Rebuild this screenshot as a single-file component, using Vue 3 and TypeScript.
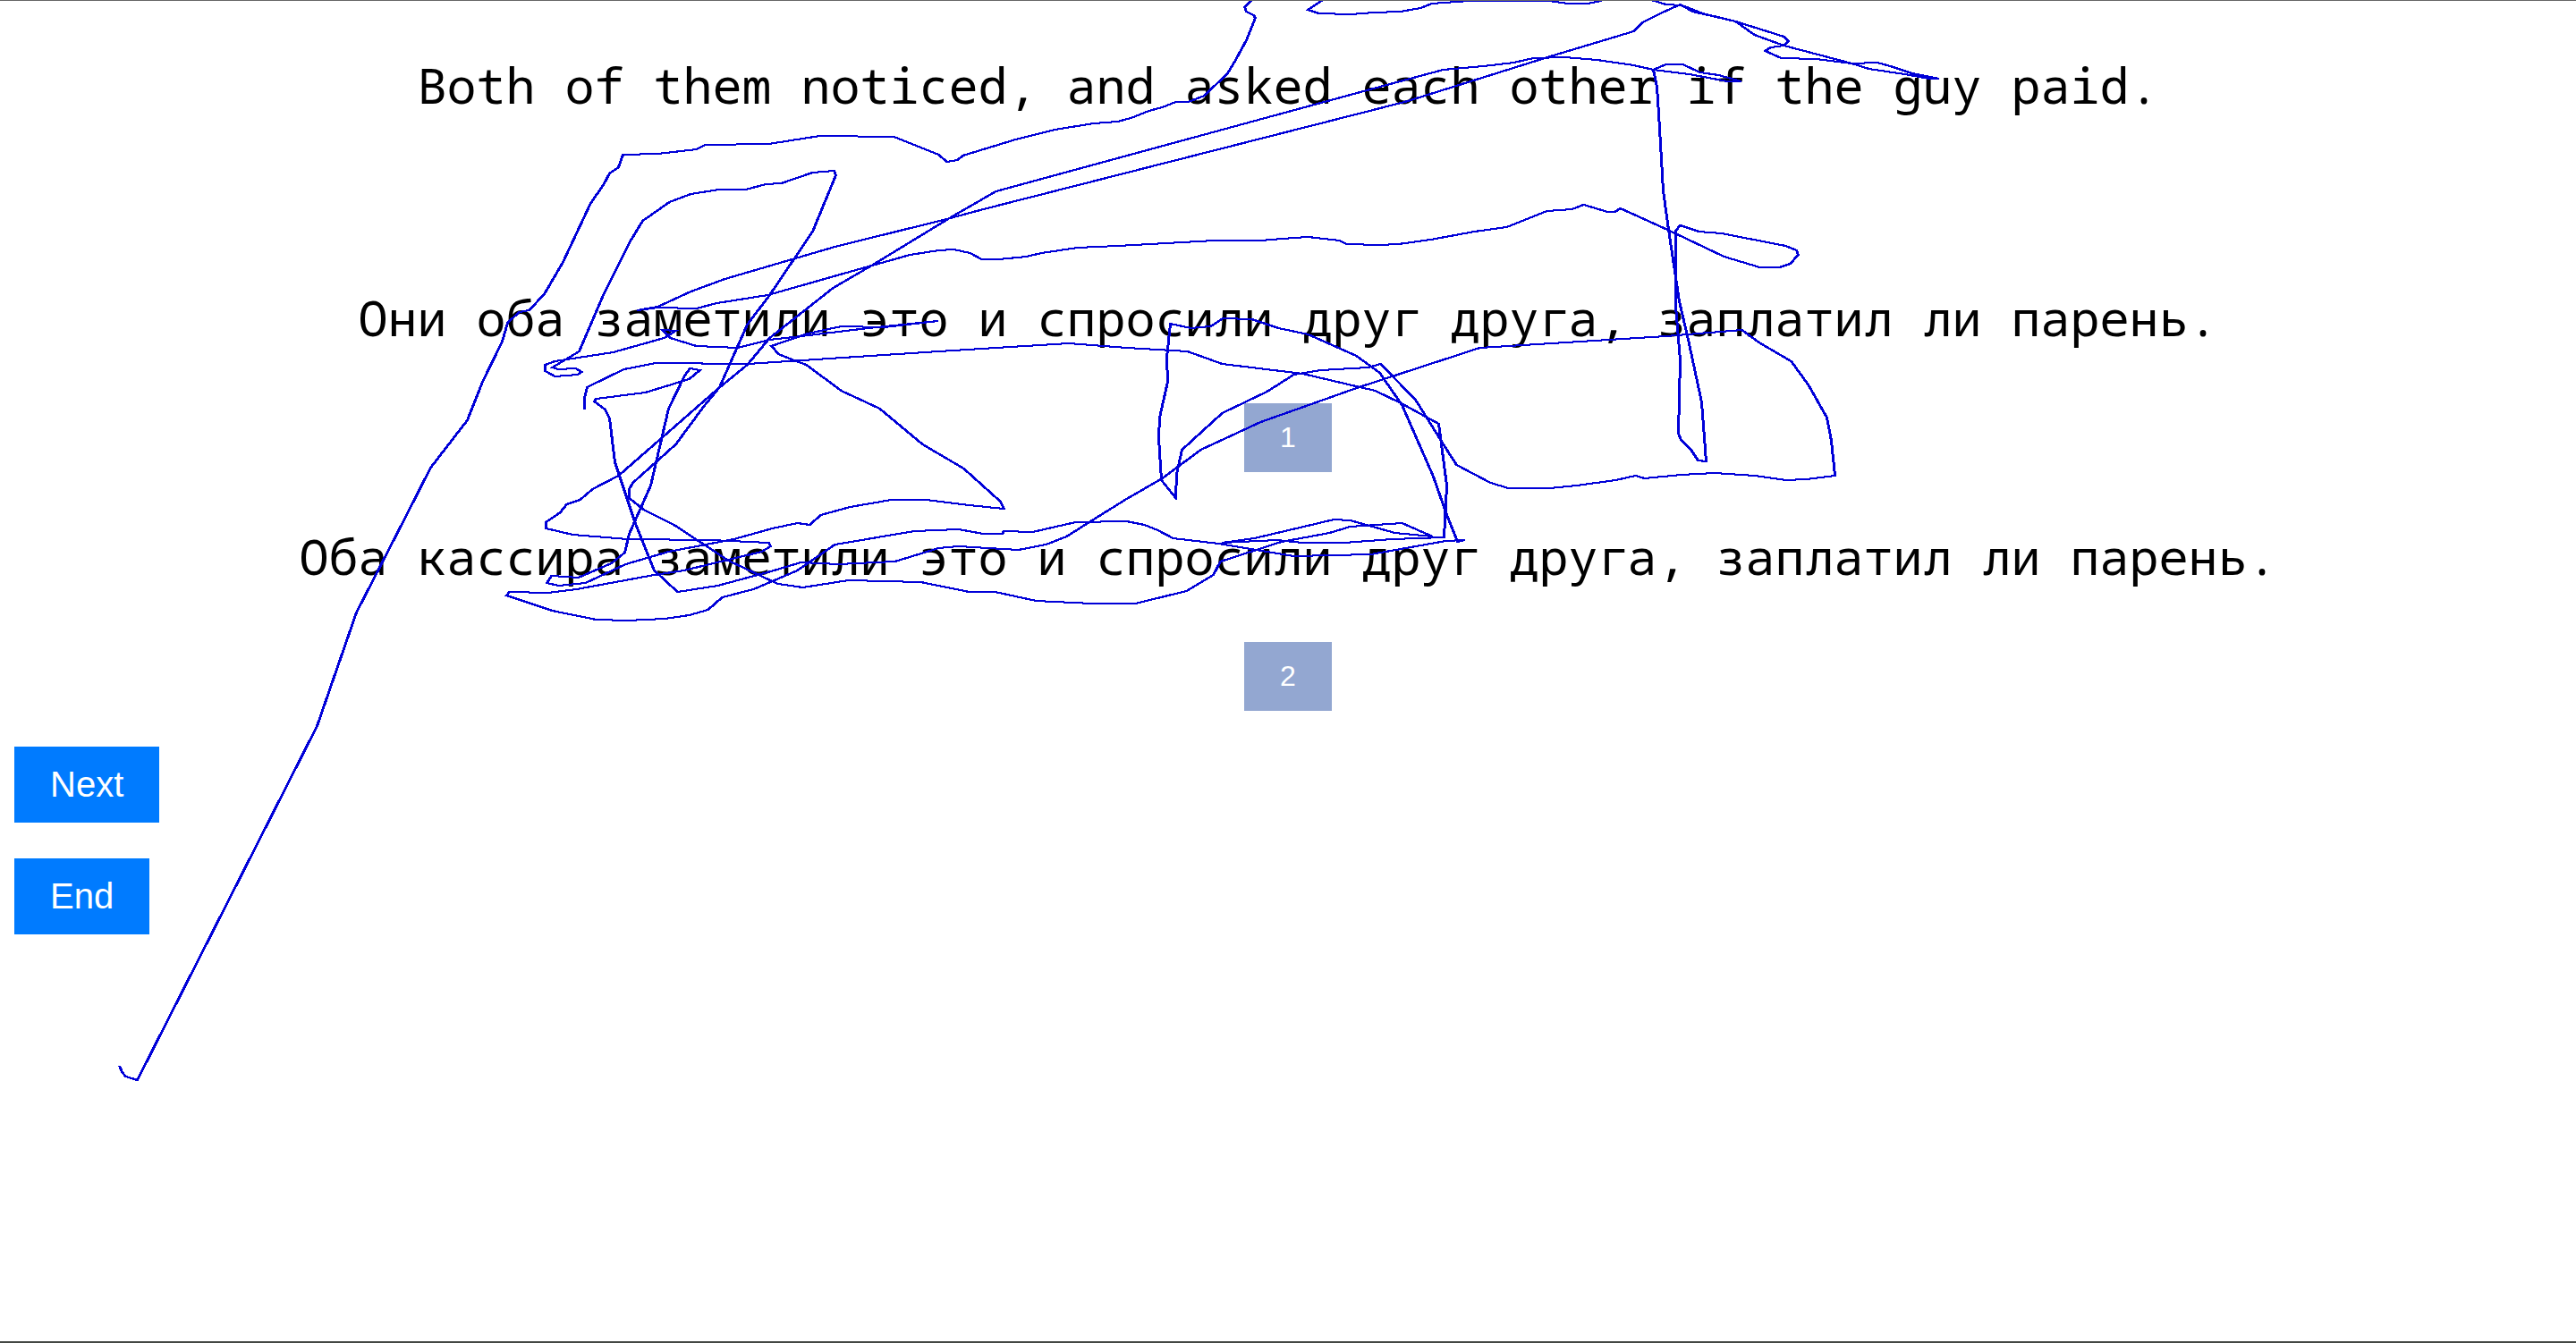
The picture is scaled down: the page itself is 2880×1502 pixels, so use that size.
<script setup lang="ts">
import { ref } from 'vue'

interface Candidate {
  id: number
  text: string
}

const source = 'Both of them noticed, and asked each other if the guy paid.'

const candidates: Candidate[] = [
  { id: 1, text: 'Они оба заметили это и спросили друг друга, заплатил ли парень.' },
  { id: 2, text: 'Оба кассира заметили это и спросили друг друга, заплатил ли парень.' },
]

const chosen = ref<number | null>(null)

// Recorded pointer track, in the order it was travelled.
const track = [
  '134,1192 137,1199 141,1204 148,1206 154,1208 355,812 399,685 453,580 482,523 523,470 540,427 562,382',
  '568,361 581,349 592,347 609,329 630,293 661,227 675,207 682,194 692,187 697,173 736,172 779,167',
  '789,162 860,161 917,152 1000,153 1050,173 1059,181 1071,179 1077,174 1100,167 1136,156 1180,145',
  '1223,138 1250,136 1265,132 1285,124 1300,120 1315,114 1329,114 1347,107 1373,82 1382,67 1394,45',
  '1404,20 1402,17 1394,13 1392,8 1399,1 1404,-3 1482,-3 1479,0 1463,11 1475,15 1511,16 1537,14',
  '1566,13 1589,9 1601,4 1643,1 1732,1 1754,4 1776,4 1790,1 1800,-4 1840,-4 1847,0 1863,5 1881,6',
  '1904,15 1941,24 1995,41 2000,46 1995,51 1980,53 1974,57 1992,65 2031,66 2071,71 2099,70 2114,74',
  '2138,82 2168,88 2158,88 2130,83 2090,77 2071,71 1995,51 1962,39 1941,24 1893,13 1879,5 1857,15',
  '1837,25 1827,35 1734,63 1600,105 1571,114 1100,234 1059,245 934,276 811,312 773,326 736,343',
  '713,347 736,344 779,345 802,339 859,330 961,301 1018,285 1050,280 1067,279 1085,283 1098,290',
  '1117,290 1148,287 1165,283 1205,277 1250,275 1358,269 1410,269 1447,266 1463,265 1498,269',
  '1506,273 1543,274 1564,273 1600,268 1649,259 1685,254 1730,236 1758,234 1771,229 1798,237',
  '1806,237 1812,233 1865,257 1928,287 1968,299 1990,299 2002,295 2011,285 2009,280 1997,275',
  '1925,261 1900,259 1879,252 1874,258 1874,343 1879,403 1877,485 1880,492 1891,503 1899,515',
  '1908,516 1903,450 1888,380 1878,337 1865,250 1860,213 1855,127 1853,97 1849,78 1863,72 1882,72',
  '1901,81 1922,84 1947,91 1932,91 1889,83 1849,78 1827,73 1786,67 1750,64 1715,65 1693,70 1659,74',
  '1614,78 1525,102 1114,214 1062,244 975,297 932,322 861,378 836,408 803,435 692,532 663,547',
  '649,559 634,564 627,573 611,584 611,591 641,598 702,603 795,604 860,607 862,611 852,617 765,638',
  '732,643 645,659 613,663 570,662 567,666 597,676 618,683 667,693 702,694 744,692 771,688 792,682',
  '808,668 843,659 892,638 934,609 1023,594 1072,592 1100,597 1121,597 1123,594 1155,595 1203,584',
  '1260,583 1280,587 1295,593 1312,602 1363,608 1447,622 1533,620 1617,605 1638,604 1630,606',
  '1617,573 1603,533 1568,453 1543,417 1517,398 1463,374 1430,367 1400,357 1368,356 1354,365',
  '1332,367 1309,362 1305,400 1306,427 1297,467 1296,490 1299,537 1315,557 1316,530 1322,503',
  '1367,462 1417,438 1447,419 1477,414 1530,411 1544,407 1583,447 1618,503 1629,520 1667,540',
  '1687,546 1733,546 1763,543 1807,537 1829,532 1839,535 1880,531 1917,529 1963,532 1997,537',
  '2020,536 2052,532 2048,493 2043,467 2022,430 2003,404 1967,383 1948,369 1863,376 1655,389',
  '1520,433 1410,472 1343,503 1300,535 1260,558 1212,588 1193,600 1170,609 1139,615 1072,611 1050,613',
  '1001,628 938,631 896,629 866,638 803,655 758,662 732,638 710,583 688,517 682,468 677,458',
  '665,449 667,446 722,439 771,424 783,414 772,412 766,420 748,457 728,543 704,597 699,618 684,630',
  '647,646 617,644 612,652 625,655 655,652 700,631 748,617 821,603 864,591 892,585 906,587 918,576',
  '951,567 997,559 1036,559 1084,565 1123,569 1119,561 1078,524 1032,497 984,457 941,437 902,408',
  '888,403 871,396 863,387 904,373 941,365 989,366 1049,359 971,367 888,377 861,380 825,389',
  '779,387 750,378 741,369 756,370 743,378 686,394 621,404 610,408 610,415 621,421 646,419 651,416',
  '644,412 625,413 618,411 648,393 675,330 705,270 719,247 749,226 773,217 804,212 834,212 857,206',
  '874,205 909,193 933,191 935,196 909,259 861,330 836,363 805,433 787,455 756,497 708,540 704,547',
  '704,557 720,570 754,587 815,627 870,653 898,657 949,649 1030,651 1084,662 1113,662 1159,672',
  '1221,675 1270,675 1327,661 1357,643 1365,628 1433,606 1487,596 1510,589 1568,585 1602,600',
  '1560,596 1510,582 1492,581 1403,602 1367,607 1428,604 1457,607 1503,607 1557,603 1615,601',
  '1618,543 1609,474 1567,451 1538,437 1457,418 1367,407 1328,393 1260,389 1195,384 1050,393',
  '836,407 734,406 698,413 657,433 654,445 654,458',
].join(' ')

const penOffsets = [-1, 0]
</script>

<template>
  <main class="page">
    <p class="sentence source">{{ source }}</p>
    <section v-for="c in candidates" :key="c.id" class="candidate">
      <p class="sentence">{{ c.text }}</p>
      <button type="button" class="choice" :aria-pressed="chosen === c.id" @click="chosen = c.id">
        {{ c.id }}
      </button>
    </section>
    <nav class="actions">
      <button type="button" class="action">Next</button>
      <button type="button" class="action">End</button>
    </nav>
    <svg class="track" viewBox="0 1 2880 1499" aria-hidden="true">
      <polyline
        v-for="dx in penOffsets"
        :key="dx"
        :points="track"
        :transform="`translate(${dx} 0)`"
      />
    </svg>
  </main>
</template>

<style>
body {
  margin: 0;
  background: #fff;
}
</style>

<style scoped>
.page {
  position: relative;
  box-sizing: border-box;
  min-height: 100vh;
  padding: 62px 16px 0;
  border-top: 1px solid #666;
  border-bottom: 2px solid #444744;
  overflow: hidden;
}

.sentence {
  margin: 0;
  color: #000;
  font-family: 'Noto Sans Mono', 'DejaVu Sans Mono', monospace;
  font-size: 55px;
  line-height: 64px;
  text-align: center;
}

.source {
  margin-bottom: 196px;
}

.candidate {
  display: flex;
  flex-direction: column;
  align-items: center;
  gap: 64px;
  margin-bottom: 62px;
}

.candidate:nth-of-type(2) {
  margin-bottom: 40px;
}

.choice,
.action {
  border: 0;
  border-radius: 0;
  color: #fff;
  font-family: 'Liberation Sans', Arial, sans-serif;
  cursor: pointer;
}

.choice {
  padding: 20px 40px;
  background: #93a7d1;
  font-size: 32px;
  line-height: 37px;
}

.actions {
  display: flex;
  flex-direction: column;
  align-items: flex-start;
  gap: 40px;
}

.action {
  padding: 20px 40px;
  background: #007bff;
  font-size: 40px;
  line-height: 45px;
}

.track {
  position: absolute;
  top: 0;
  left: 0;
  width: 100%;
  pointer-events: none;
}

.track polyline {
  fill: none;
  stroke: #0000d8;
  stroke-width: 2;
  shape-rendering: crispEdges;
}
</style>
